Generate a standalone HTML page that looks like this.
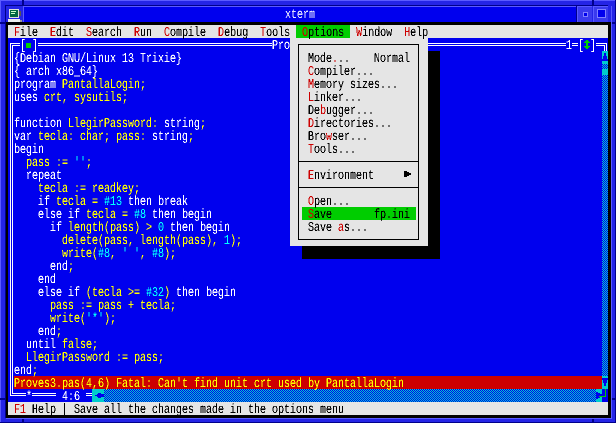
<!DOCTYPE html>
<html><head><meta charset="utf-8">
<style>
html,body{margin:0;padding:0;background:#2424e6}
#s{position:relative;width:616px;height:423px;overflow:hidden;background:#2424e6}
#s div.r,#s svg.i{position:absolute;display:block}
.t{position:absolute;left:8px;top:27px;width:810px;height:390px;transform:scaleX(.74062);transform-origin:0 0;font:13.5px/13px "Liberation Mono",monospace;text-rendering:geometricPrecision;color:#fff}
.l{position:absolute;left:0;white-space:pre;height:13px}
.y{color:#ff0}.c{color:#0ff}.k{color:#000}.d{color:#cd0000}.w{color:#fff}
</style></head><body>
<div id="s">
<svg width="0" height="0" style="position:absolute"><defs><pattern id="dp" width="2" height="2" patternUnits="userSpaceOnUse"><rect width="2" height="2" fill="#00e"/><rect width="1" height="1" fill="#00cdcd"/><rect x="1" y="1" width="1" height="1" fill="#00cdcd"/></pattern></defs><filter id="a" color-interpolation-filters="sRGB" x="0" y="0" width="100%" height="100%"><feComponentTransfer><feFuncA type="discrete" tableValues="0 0 1 1 1"/></feComponentTransfer></filter></svg>

<!-- window frame -->
<div class="r" style="left:0;top:0;width:616px;height:1px;background:#5a5aff"></div>
<div class="r" style="left:0;top:0;width:1px;height:423px;background:#5a5aff"></div>
<div class="r" style="left:615px;top:0;width:1px;height:423px;background:#00008b"></div>
<div class="r" style="left:0;top:422px;width:616px;height:1px;background:#00008b"></div>
<div class="r" style="left:22px;top:0;width:2px;height:6px;background:#00008b"></div>
<div class="r" style="left:592px;top:0;width:2px;height:6px;background:#00008b"></div>
<div class="r" style="left:22px;top:418px;width:2px;height:5px;background:#00008b"></div>
<div class="r" style="left:592px;top:418px;width:2px;height:5px;background:#00008b"></div>
<div class="r" style="left:0;top:22px;width:6px;height:2px;background:#00008b"></div>
<div class="r" style="left:611px;top:22px;width:5px;height:2px;background:#00008b"></div>
<div class="r" style="left:0;top:398px;width:6px;height:2px;background:#00008b"></div>
<div class="r" style="left:611px;top:398px;width:5px;height:2px;background:#00008b"></div>
<div class="r" style="left:5px;top:5px;width:603px;height:1px;background:#00008b"></div>
<div class="r" style="left:5px;top:5px;width:1px;height:413px;background:#00008b"></div>
<!-- title -->
<div class="r" style="left:24px;top:6px;width:552px;height:1px;background:#5a5aff"></div>
<div class="r" style="left:24px;top:7px;width:552px;height:15px;background:#00e"></div>
<div class="r" style="left:23px;top:6px;width:1px;height:16px;background:#5a5aff"></div>
<div class="r" style="left:576px;top:6px;width:1px;height:16px;background:#00008b"></div>
<!-- buttons -->
<div class="r" style="left:577px;top:6px;width:15px;height:16px;background:#3a3aee;border-top:1px solid #5a5aff;border-left:1px solid #5a5aff;box-sizing:border-box"></div>
<div class="r" style="left:583px;top:12px;width:5px;height:5px;background:#00e;border:1px solid #8080ff;box-sizing:border-box"></div>
<div class="r" style="left:593px;top:6px;width:15px;height:16px;background:#3a3aee;border-top:1px solid #5a5aff;border-left:1px solid #5a5aff;box-sizing:border-box"></div>
<div class="r" style="left:597px;top:9px;width:9px;height:9px;background:#00e;border:1px solid #8080ff;box-sizing:border-box"></div>
<!-- icon -->
<svg class="i" style="left:8px;top:8px" width="15" height="15" viewBox="0 0 15 15" shape-rendering="crispEdges">
<rect x="1" y="1" width="10" height="9" fill="#ddd"/><rect x="2" y="2" width="8" height="7" fill="#064"/>
<rect x="3" y="3" width="5" height="1" fill="#cfc"/><rect x="3" y="5" width="4" height="1" fill="#cfc"/>
<rect x="11" y="3" width="2" height="5" fill="#555"/><rect x="0" y="11" width="12" height="3" fill="#eee"/><rect x="12" y="12" width="2" height="2" fill="#999"/></svg>

<!-- black client edge -->
<div class="r" style="left:6px;top:22px;width:605px;height:396px;background:#000"></div>
<div class="r" style="left:611px;top:6px;width:1px;height:412px;background:#5a5aff"></div>
<div class="r" style="left:6px;top:418px;width:606px;height:1px;background:#5a5aff"></div>

<!-- screen -->
<div class="r" style="left:8px;top:25px;width:600px;height:13px;background:#e5e5e5"></div>
<div class="r" style="left:296px;top:25px;width:54px;height:13px;background:#00cd00"></div>
<div class="r" style="left:8px;top:38px;width:600px;height:364px;background:#00e"></div>
<div class="r" style="left:8px;top:402px;width:600px;height:13px;background:#e5e5e5"></div>
<div class="r" style="left:64px;top:403px;width:1px;height:12px;background:#000"></div>

<!-- editor frame -->
<div class="r" style="left:10px;top:43px;width:10px;height:1px;background:#fff"></div>
<div class="r" style="left:12px;top:45px;width:8px;height:1px;background:#fff"></div>
<div class="r" style="left:38px;top:43px;width:234px;height:1px;background:#fff"></div>
<div class="r" style="left:38px;top:45px;width:234px;height:1px;background:#fff"></div>
<div class="r" style="left:428px;top:43px;width:138px;height:1px;background:#fff"></div>
<div class="r" style="left:428px;top:45px;width:138px;height:1px;background:#fff"></div>
<div class="r" style="left:572px;top:43px;width:6px;height:1px;background:#fff"></div>
<div class="r" style="left:572px;top:45px;width:6px;height:1px;background:#fff"></div>
<div class="r" style="left:596px;top:43px;width:11px;height:1px;background:#fff"></div>
<div class="r" style="left:596px;top:45px;width:9px;height:1px;background:#fff"></div>
<div class="r" style="left:606px;top:43px;width:1px;height:8px;background:#fff"></div>
<div class="r" style="left:604px;top:45px;width:1px;height:6px;background:#fff"></div>
<div class="r" style="left:10px;top:43px;width:1px;height:353px;background:#fff"></div>
<div class="r" style="left:12px;top:45px;width:1px;height:349px;background:#fff"></div>
<div class="r" style="left:10px;top:395px;width:16px;height:1px;background:#fff"></div>
<div class="r" style="left:12px;top:393px;width:14px;height:1px;background:#fff"></div>
<div class="r" style="left:32px;top:395px;width:24px;height:1px;background:#fff"></div>
<div class="r" style="left:32px;top:393px;width:24px;height:1px;background:#fff"></div>
<div class="r" style="left:86px;top:395px;width:6px;height:1px;background:#fff"></div>
<div class="r" style="left:86px;top:393px;width:6px;height:1px;background:#fff"></div>
<div class="r" style="left:26px;top:43px;width:5px;height:5px;background:#00cd00"></div>
<svg class="i" style="left:584px;top:39px" width="6" height="11" viewBox="0 0 6 11" shape-rendering="crispEdges" fill="#00cd00"><rect x="2" y="1" width="2" height="9"/><rect x="1" y="2" width="4" height="1"/><rect x="1" y="8" width="4" height="1"/><rect x="0" y="3" width="6" height="1"/><rect x="0" y="7" width="6" height="1"/></svg>

<!-- scrollbars -->
<svg class="i" style="left:602px;top:51px" width="6" height="325" shape-rendering="crispEdges"><rect width="6" height="325" fill="url(#dp)"/></svg>
<div class="r" style="left:602px;top:51px;width:6px;height:13px;background:#00cdcd"></div>
<svg class="i" style="left:602px;top:53px" width="6" height="8" viewBox="0 0 6 8" shape-rendering="crispEdges" fill="#00e"><rect x="2" y="0" width="2" height="3"/><rect x="1" y="3" width="4" height="3"/><rect x="0" y="6" width="6" height="2"/></svg>
<div class="r" style="left:602px;top:69px;width:6px;height:6px;background:#00cdcd"></div>
<div class="r" style="left:602px;top:376px;width:6px;height:13px;background:#00cdcd"></div>
<svg class="i" style="left:602px;top:378px" width="6" height="8" viewBox="0 0 6 8" shape-rendering="crispEdges" fill="#00e"><rect x="0" y="0" width="6" height="2"/><rect x="1" y="2" width="4" height="3"/><rect x="2" y="5" width="2" height="3"/></svg>
<svg class="i" style="left:104px;top:389px" width="492" height="13" shape-rendering="crispEdges"><rect width="492" height="13" fill="url(#dp)"/></svg>
<div class="r" style="left:92px;top:389px;width:12px;height:13px;background:#00cdcd"></div>
<svg class="i" style="left:95px;top:392px" width="9" height="7" viewBox="0 0 9 7" shape-rendering="crispEdges" fill="#00e"><rect x="0" y="3" width="9" height="1"/><rect x="2" y="2" width="7" height="3"/><rect x="3" y="1" width="3" height="5"/></svg>
<div class="r" style="left:596px;top:389px;width:6px;height:13px;background:#00cdcd"></div>
<svg class="i" style="left:596px;top:392px" width="6" height="7" viewBox="0 0 6 7" shape-rendering="crispEdges" fill="#00e"><rect x="0" y="0" width="2" height="7"/><rect x="2" y="1" width="2" height="5"/><rect x="4" y="2" width="2" height="3"/></svg>
<div class="r" style="left:605px;top:389px;width:1px;height:8px;background:#00cd00"></div>
<div class="r" style="left:599px;top:396px;width:7px;height:1px;background:#00cd00"></div>

<!-- error line -->
<div class="r" style="left:14px;top:376px;width:588px;height:13px;background:#cd0000"></div>

<!-- menu -->
<div class="r" style="left:302px;top:51px;width:138px;height:208px;background:#000"></div>
<div class="r" style="left:290px;top:38px;width:138px;height:208px;background:#e5e5e5"></div>
<div class="r" style="left:298px;top:44px;width:121px;height:196px;border:1px solid #000;box-sizing:border-box"></div>
<div class="r" style="left:298px;top:161px;width:121px;height:1px;background:#000"></div>
<div class="r" style="left:298px;top:187px;width:121px;height:1px;background:#000"></div>
<div class="r" style="left:302px;top:207px;width:114px;height:13px;background:#00cd00"></div>
<svg class="i" style="left:404px;top:171px" width="7" height="7" viewBox="0 0 7 7" shape-rendering="crispEdges" fill="#000"><rect x="0" y="0" width="3" height="6"/><rect x="3" y="1" width="2" height="4"/><rect x="5" y="2" width="2" height="2"/></svg>

<!-- text -->
<div style="position:absolute;left:0;top:0;width:616px;height:423px;filter:url(#a)">
<div class="t" style="left:285px;top:9px;color:#e0e0ff">xterm</div>
<div class="t">
<div class="l k" style="top:0"> <span class="d">F</span>ile  <span class="d">E</span>dit  <span class="d">S</span>earch  <span class="d">R</span>un  <span class="d">C</span>ompile  <span class="d">D</span>ebug  <span class="d">T</span>ools  <span class="d">O</span>ptions  <span class="d">W</span>indow  <span class="d">H</span>elp</div>
<div class="l" style="top:13px">  [ ]                                       Pro</div>
<div class="l" style="top:13px;left:753.4px">1 [ ]</div>
<div class="l" style="top:26px"> {Debian GNU/Linux 13 Trixie}</div>
<div class="l" style="top:39px"> { arch x86_64}</div>
<div class="l" style="top:52px"> program <span class="y">PantallaLogin;</span></div>
<div class="l" style="top:65px"> uses <span class="y">crt, sysutils;</span></div>
<div class="l" style="top:91px"> function <span class="y">LlegirPassword:</span> string<span class="y">;</span></div>
<div class="l" style="top:104px"> var <span class="y">tecla: char; pass:</span> string<span class="y">;</span></div>
<div class="l" style="top:117px"> begin</div>
<div class="l" style="top:130px">   <span class="y">pass :=</span> <span class="c">''</span><span class="y">;</span></div>
<div class="l" style="top:143px">   repeat</div>
<div class="l" style="top:156px">     <span class="y">tecla := readkey;</span></div>
<div class="l" style="top:169px">     if <span class="y">tecla =</span> <span class="c">#13</span> then break</div>
<div class="l" style="top:182px">     else if <span class="y">tecla =</span> <span class="c">#8</span> then begin</div>
<div class="l" style="top:195px">       if <span class="y">length(pass) &gt;</span> <span class="c">0</span> then begin</div>
<div class="l" style="top:208px">         <span class="y">delete(pass, length(pass),</span> <span class="c">1</span><span class="y">);</span></div>
<div class="l" style="top:221px">         <span class="y">write(</span><span class="c">#8</span><span class="y">,</span> <span class="c">' '</span><span class="y">,</span> <span class="c">#8</span><span class="y">);</span></div>
<div class="l" style="top:234px">       end<span class="y">;</span></div>
<div class="l" style="top:247px">     end</div>
<div class="l" style="top:260px">     else if <span class="y">(tecla &gt;=</span> <span class="c">#32</span><span class="y">)</span> then begin</div>
<div class="l" style="top:273px">       <span class="y">pass := pass + tecla;</span></div>
<div class="l" style="top:286px">       <span class="y">write(</span><span class="c">'*'</span><span class="y">);</span></div>
<div class="l" style="top:299px">     end<span class="y">;</span></div>
<div class="l" style="top:312px">   until <span class="y">false;</span></div>
<div class="l" style="top:325px">   <span class="y">LlegirPassword := pass;</span></div>
<div class="l" style="top:338px"> end<span class="y">;</span></div>
<div class="l y" style="top:351px"> Proves3.pas(4,6) Fatal: Can't find unit crt used by PantallaLogin</div>
<div class="l" style="top:364px">   *     4:6</div>
<div class="l k" style="top:377px"> <span class="d">F1</span> Help   Save all the changes made in the options menu</div>
<!-- menu items -->
<div class="l k" style="top:26px;left:405.1px">Mode<span class="d">.</span>..    Normal</div>
<div class="l k" style="top:39px;left:405.1px"><span class="d">C</span>ompiler...</div>
<div class="l k" style="top:52px;left:405.1px"><span class="d">M</span>emory sizes...</div>
<div class="l k" style="top:65px;left:405.1px"><span class="d">L</span>inker...</div>
<div class="l k" style="top:78px;left:405.1px">De<span class="d">b</span>ugger...</div>
<div class="l k" style="top:91px;left:405.1px"><span class="d">D</span>irectories...</div>
<div class="l k" style="top:104px;left:405.1px">Bro<span class="d">w</span>ser...</div>
<div class="l k" style="top:117px;left:405.1px"><span class="d">T</span>ools...</div>
<div class="l k" style="top:143px;left:405.1px"><span class="d">E</span>nvironment</div>
<div class="l k" style="top:169px;left:405.1px"><span class="d">O</span>pen...</div>
<div class="l k" style="top:182px;left:405.1px"><span class="d">S</span>ave       fp.ini</div>
<div class="l k" style="top:195px;left:405.1px">Save <span class="d">a</span>s...</div>
</div>
</div>
</div>
</body></html>
